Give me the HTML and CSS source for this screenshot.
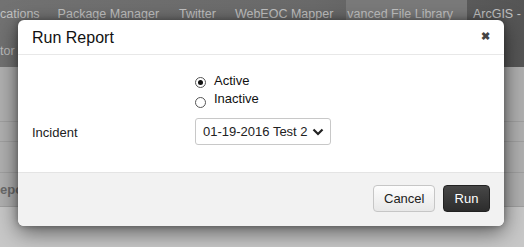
FILE: index.html
```html
<!DOCTYPE html>
<html>
<head>
<meta charset="utf-8">
<link rel="stylesheet" href="styles.css">
</head>
<body>
<div class="page">
  <nav class="topnav">
    <div class="nav-row">
      <span class="nav-item first">cations</span>
      <span class="nav-item">Package Manager</span>
      <span class="nav-item">Twitter</span>
      <span class="nav-item">WebEOC Mapper</span>
      <span class="nav-item active">vanced File Library</span>
      <span class="nav-item">ArcGIS -</span>
    </div>
    <div class="nav-row second">
      <span class="nav-item first">tor</span>
    </div>
  </nav>
  <div class="content">
    <div class="crow r1"></div>
    <div class="crow r2"></div>
    <div class="crow r3"></div>
    <div class="crow r4"><span class="heading">epo</span></div>
    <div class="crow r5"></div>
  </div>
</div>

<div class="modal">
  <div class="modal-header">
    <h4 class="modal-title">Run Report</h4>
    <span class="close">&#x2716;</span>
  </div>
  <div class="modal-body">
    <div class="form-row">
      <div class="label-col"></div>
      <div class="field-col radios">
        <label class="radio"><span class="dot checked"></span>Active</label>
        <label class="radio low"><span class="dot"></span>Inactive</label>
      </div>
    </div>
    <div class="form-row select-row">
      <div class="label-col">Incident</div>
      <div class="field-col">
        <div class="select">
          <span>01-19-2016 Test 2</span>
          <svg class="chev" width="12" height="8" viewBox="0 0 12 8"><path d="M1.5 1.5 L6 6 L10.5 1.5" fill="none" stroke="#222" stroke-width="2.2"/></svg>
        </div>
      </div>
    </div>
  </div>
  <div class="modal-footer">
    <button class="btn btn-default">Cancel</button>
    <button class="btn btn-dark">Run</button>
  </div>
</div>
</body>
</html>
```

FILE: styles.css
```css
* { box-sizing: border-box; }
html, body { margin: 0; padding: 0; }
body {
  width: 524px;
  height: 247px;
  overflow: hidden;
  position: relative;
  font-family: "Liberation Sans", Arial, sans-serif;
  background: #c8c8c8;
}
.page { width: 524px; }
.topnav {
  height: 67px;
  background: linear-gradient(to right, #727272 0%, #6a6a6a 60%, #555 100%);
  color: #c2c2c2;
  font-size: 12.5px;
}
.nav-row {
  display: flex;
  height: 29px;
  align-items: center;
}
.nav-item { line-height: 29px; white-space: nowrap; }
.nav-item.first { margin-left: 0; }
.nav-item + .nav-item { margin-left: 18px; }
.nav-item:nth-child(3) { margin-left: 20px; }
.nav-item:nth-child(4) { margin-left: 19px; }
.nav-item.active { margin-left: 13px; background: #7a7a7a; padding: 0 14px 0 1px; }
.nav-row .active + .nav-item { margin-left: 6px; }
.nav-row.second { height: 38px; align-items: center; color: #bdbdbd; padding-top: 6px; }
.content { background: #b0b0b0; }
.crow { border-bottom: 1px solid #a0a0a0; }
.r1 { height: 55px; }
.r2 { height: 20px; }
.r3 { height: 31px; }
.r4 { height: 34px; display: flex; align-items: center; }
.r5 { height: 20px; border-bottom: 0; background: #c8c8c8; }
.heading { font-weight: bold; color: #6a6a6a; font-size: 13px; margin-left: 0; }

.modal {
  position: absolute;
  left: 18px;
  top: 20px;
  width: 486px;
  height: 206px;
  background: #fff;
  border-radius: 6px;
  box-shadow: 0 6px 22px rgba(0,0,0,0.55), 0 0 6px rgba(0,0,0,0.3);
  display: flex;
  flex-direction: column;
  color: #222;
}
.modal-header {
  height: 35px;
  border-bottom: 1px solid #e8e8e8;
  display: flex;
  align-items: center;
  justify-content: space-between;
  padding: 0 14px 0 14px;
}
.modal-title { margin: 0; font-size: 16px; font-weight: normal; color: #111; padding-top: 2px; }
.close { font-size: 11px; color: #444; font-weight: bold; margin-top: -2px; }
.modal-body {
  flex: 1;
  padding: 16px 14px 0 14px;
  font-size: 13px;
}
.form-row { display: flex; }
.label-col { width: 163px; }
.field-col { flex: 1; }
.radios { display: flex; flex-direction: column; }
.radio { display: flex; align-items: center; height: 18px; color: #111; }
.radio.low .dot { margin-top: 8px; }
.dot {
  width: 11px; height: 11px;
  border: 1px solid #555;
  border-radius: 50%;
  margin-right: 8px;
  margin-top: 4px;
  display: inline-flex;
  align-items: center;
  justify-content: center;
  background: #fff;
}
.dot.checked::after {
  content: "";
  width: 5px; height: 5px;
  border-radius: 50%;
  background: #111;
}
.select-row { margin-top: 11px; align-items: center; }
.select-row .label-col { color: #222; padding-top: 1px; }
.select {
  width: 136px;
  height: 27px;
  border: 1px solid #c8c8c8;
  border-radius: 3px;
  display: flex;
  align-items: center;
  justify-content: space-between;
  padding: 0 6px 0 7px;
  color: #222;
}
.chev { margin-top: 1px; }
.modal-footer {
  height: 54px;
  border-top: 1px solid #e4e4e4;
  background: #f2f2f2;
  border-radius: 0 0 6px 6px;
  display: flex;
  justify-content: flex-end;
  align-items: flex-start;
  padding: 12px 14px 0 0;
  gap: 8px;
}
.btn {
  font-family: "Liberation Sans", Arial, sans-serif;
  font-size: 13px;
  height: 27px;
  border-radius: 4px;
  padding: 0 10px;
  cursor: pointer;
}
.btn-default {
  width: 62px;
  background: linear-gradient(#fdfdfd, #e8e8e8);
  border: 1px solid #c6c6c6;
  color: #222;
}
.btn-dark {
  width: 47px;
  background: linear-gradient(#474747, #2c2c2c);
  border: 1px solid #222;
  color: #fff;
}
```
